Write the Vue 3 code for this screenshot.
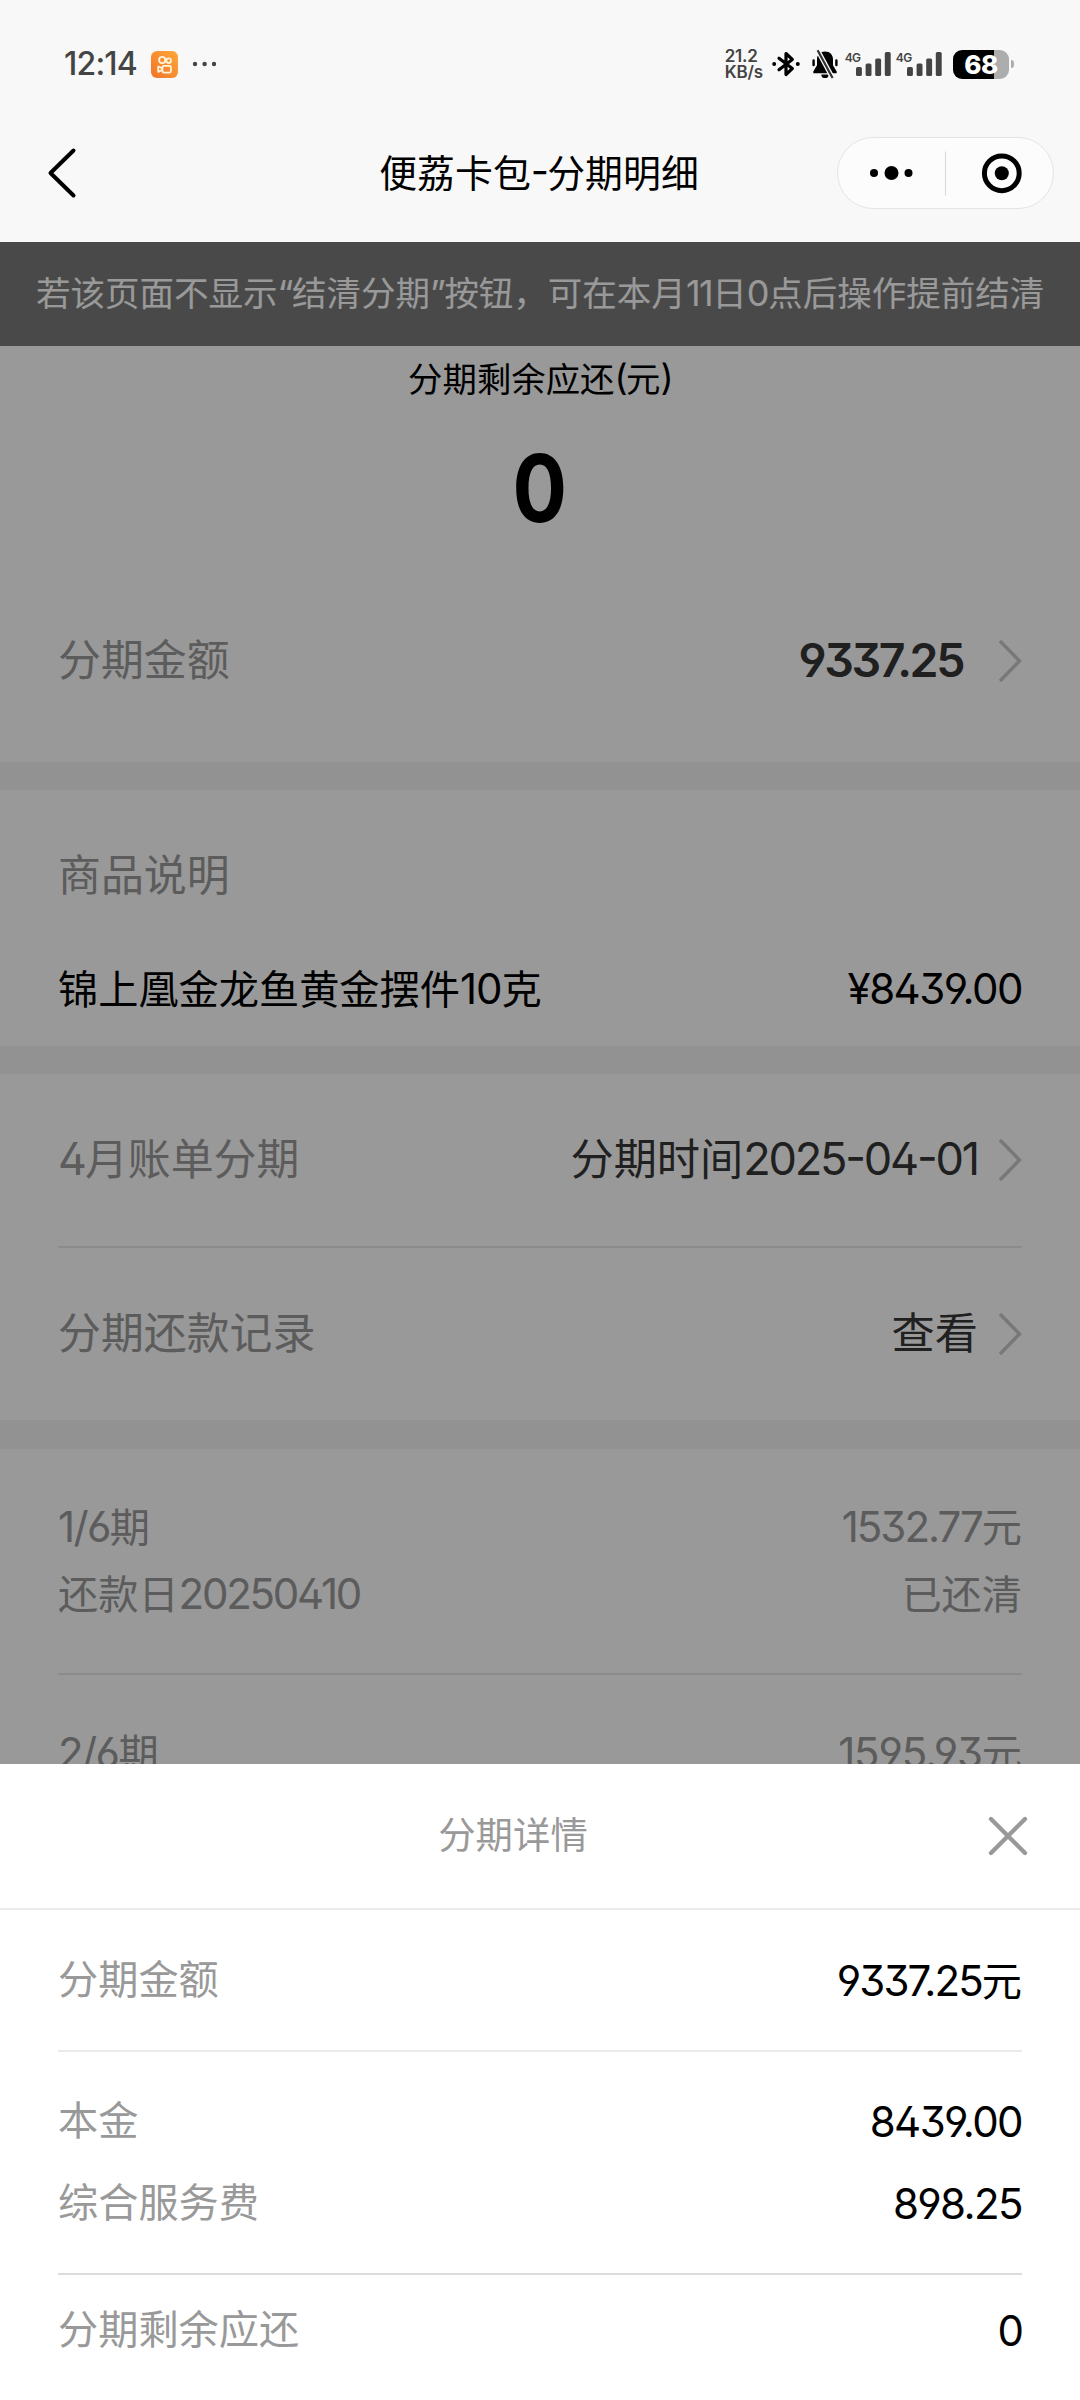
<script setup>
import { h } from 'vue'

// Splits a string into Latin/digit runs and Chinese runs so each gets its own face.
const Txt = (props) =>
  h(
    'span',
    { class: 'txt' },
    props.s
      .split(/([0-9A-Za-z.\-/¥()“”]+)/)
      .filter(Boolean)
      .map((run) => (/[0-9A-Za-z.\-/¥()“”]/.test(run) ? h('span', { class: 'num' }, run) : run))
  )
Txt.props = ['s']

const bars = [
  { x: 0, top: 15 },
  { x: 9.6, top: 11.6 },
  { x: 19.2, top: 6.4 },
  { x: 28.8, top: 0 },
]

const periods = [
  { name: '1/6期', amount: '1532.77元', due: '还款日20250410', state: '已还清' },
  { name: '2/6期', amount: '1595.93元', due: '还款日20250510', state: '已还清' },
]
</script>

<template>
  <div class="screen">
    <header class="top">
      <div class="status">
        <div class="status-left">
          <span class="time">12:14</span>
          <svg class="app" width="27" height="27" viewBox="0 0 27 27">
            <defs>
              <linearGradient id="kw" x1="1" y1="0" x2="0" y2="1">
                <stop offset="0" stop-color="#ffa838" />
                <stop offset="1" stop-color="#f0752a" />
              </linearGradient>
            </defs>
            <rect width="27" height="27" rx="6" fill="url(#kw)" />
            <g fill="none" stroke="#fff3d8" stroke-width="1.8">
              <circle cx="11.2" cy="9" r="3.1" />
              <circle cx="17.7" cy="9.7" r="2.3" />
              <rect x="11.4" y="14.8" width="8.6" height="6.800" rx="1.800" />
              <path d="M11.200 17.200 7.200 15.600v5.200l4-1.600" stroke-linejoin="round" />
            </g>
          </svg>
          <svg class="more" width="26" height="6" viewBox="0 0 26 6" fill="#444">
            <circle cx="3" cy="3" r="2.200" /><circle cx="12.600" cy="3" r="2.200" /><circle cx="22" cy="3" r="2.200" />
          </svg>
        </div>
        <div class="status-right">
          <div class="speed"><span>21.2</span><span>KB/s</span></div>
          <svg class="bt" width="28" height="28" viewBox="0 0 28 28">
            <path d="M7 8.200 20.300 18.600 14 24.500V3.500l6.300 5.900L7 19.800" fill="none" stroke="#000" stroke-width="3.200" stroke-linejoin="round" stroke-linecap="round" />
            <circle cx="2.200" cy="14" r="2" /><circle cx="25.800" cy="14" r="2" />
          </svg>
          <svg class="bell" width="26" height="30" viewBox="0 0 26 30">
            <path d="M13 2.500c-5 0-8 3.400-8 8v5.800L1.300 22.600v1.600h23.400v-1.600L21 16.300v-5.800c0-4.600-3-8-8-8z" />
            <path d="M9.300 25.400h7.400a3.700 3.700 0 0 1-7.400 0z" />
            <path d="M1.600 11.500v4.500M24.400 11.500v4.500" stroke="#000" stroke-width="2.400" stroke-linecap="round" />
            <path d="M5.600 1.200 20.600 29" stroke="#f8f8f8" stroke-width="4.800" />
            <path d="M5.600 1.200 20.600 29" stroke="#333" stroke-width="2.200" />
          </svg>
          <div v-for="n in 2" :key="n" class="signal">
            <span class="net">4G</span>
            <svg width="35" height="24" viewBox="0 0 35 24" fill="#444">
              <rect v-for="b in bars" :key="b.x" :x="b.x" :y="b.top" width="5.900" :height="24 - b.top" rx="1.500" />
            </svg>
          </div>
          <div class="battery"><span>68</span></div>
          <i class="nub"></i>
        </div>
      </div>
      <div class="nav">
        <svg class="back" width="30" height="52" viewBox="0 0 30 52">
          <path d="M26.500 3.500 3.500 26l23 22.500" fill="none" stroke="#000" stroke-width="4" stroke-linejoin="round" stroke-linecap="round" />
        </svg>
        <h1><Txt s="便荔卡包-分期明细" /></h1>
        <div class="capsule">
          <svg width="215" height="70" viewBox="0 0 215 70">
            <circle cx="36" cy="35" r="4" /><circle cx="53.500" cy="35" r="7" /><circle cx="70.500" cy="35" r="4" />
            <path d="M107.500 13.500v44" stroke="#dcdcdc" stroke-width="1.200" />
            <circle cx="163.800" cy="35.300" r="17.400" fill="none" stroke="#000" stroke-width="5" />
            <circle cx="163.800" cy="35.300" r="7" />
          </svg>
        </div>
      </div>
    </header>

    <main class="page">
      <div class="notice"><Txt s="若该页面不显示“结清分期”按钮，可在本月11日0点后操作提前结清" /></div>

      <section class="summary">
        <div class="caption"><Txt s="分期剩余应还(元)" /></div>
        <div class="big"><span>0</span></div>
        <div class="row total">
          <span class="label">分期金额</span>
          <span class="value strong"><Txt s="9337.25" /></span>
          <svg class="chev" width="24" height="44" viewBox="0 0 24 44"><path d="M2 2l19.500 20L2 42" /></svg>
        </div>
      </section>

      <section class="product">
        <div class="row head"><span class="label">商品说明</span></div>
        <div class="row item">
          <Txt class="name" s="锦上凰金龙鱼黄金摆件10克" />
          <Txt class="price" s="¥8439.00" />
        </div>
      </section>

      <section class="bill">
        <div class="row line">
          <Txt class="label" s="4月账单分期" />
          <Txt class="value date" s="分期时间2025-04-01" />
          <svg class="chev" width="24" height="44" viewBox="0 0 24 44"><path d="M2 2l19.500 20L2 42" /></svg>
        </div>
        <div class="row line">
          <span class="label">分期还款记录</span>
          <span class="value">查看</span>
          <svg class="chev" width="24" height="44" viewBox="0 0 24 44"><path d="M2 2l19.500 20L2 42" /></svg>
        </div>
      </section>

      <section class="periods">
        <div v-for="p in periods" :key="p.name" class="period">
          <div class="pair"><Txt class="nth" :s="p.name" /><Txt class="amt" :s="p.amount" /></div>
          <div class="pair"><Txt class="due" :s="p.due" /><span>{{ p.state }}</span></div>
        </div>
      </section>
      <div class="mask"></div>
    </main>

    <aside class="sheet">
      <div class="sheet-head">
        <span>分期详情</span>
        <svg class="close" width="40" height="40" viewBox="0 0 40 40"><path d="M3 3l34 34M37 3 3 37" stroke="#999" stroke-width="4.300" stroke-linecap="round" /></svg>
      </div>
      <div class="srow first"><span>分期金额</span><Txt class="sv" s="9337.25元" /></div>
      <div class="group">
        <div class="srow"><span>本金</span><Txt class="sv wide" s="8439.00" /></div>
        <div class="srow"><span>综合服务费</span><Txt class="sv wide" s="898.25" /></div>
      </div>
      <div class="srow last"><span>分期剩余应还</span><Txt class="sv" s="0" /></div>
    </aside>
  </div>
</template>

<style>
body { margin: 0; }
</style>

<style scoped>
.screen {
  position: relative;
  width: 1080px;
  height: 2400px;
  overflow: hidden;
  background: #fff;
  font-family: 'Noto Sans CJK SC', sans-serif;
  font-size: 40.200px;
  color: #000;
  white-space: nowrap;
}
:deep(.num) {
  font-family: Inter, 'Noto Sans CJK SC', sans-serif;
  font-size: 1.045em;
  line-height: 0;
  letter-spacing: -0.045em;
  font-feature-settings: 'cv09', 'ss01', 'cv03', 'cv04', 'case';
}
.price :deep(.num) { letter-spacing: -0.036em; }
.wide :deep(.num) { letter-spacing: -0.038em; }
.date :deep(.num) { letter-spacing: -0.049em; }
.due :deep(.num) { letter-spacing: -0.054em; }
.strong :deep(.num) { letter-spacing: -0.052em; }
.name :deep(.num) { letter-spacing: -0.025em; }
.nth :deep(.num) { letter-spacing: -0.038em; }
.notice :deep(.num) { letter-spacing: -0.040em; }
.amt :deep(.num) { letter-spacing: -0.048em; }
.period + .period .amt :deep(.num) { letter-spacing: -0.028em; }
svg { display: block; flex: none; }

.top { height: 242px; background: #f8f8f8; }
.status {
  height: 128px;
  box-sizing: border-box;
  padding: 0 66px 0 64px;
  display: flex;
  justify-content: space-between;
  align-items: center;
  color: #444;
  font-family: Inter, sans-serif;
}
.status-left, .status-right { display: flex; align-items: center; }
.time { width: 87px; font-size: 32px; line-height: 40px; letter-spacing: -0.800px; font-weight: 450; }
.more { margin-left: 14px; }
.speed {
  display: flex;
  flex-direction: column;
  width: 47px;
  font-size: 17px;
  line-height: 16px;
  font-weight: 600;
}
.speed span { letter-spacing: -0.200px; }
.bell { margin-left: 12px; }
.signal { display: flex; margin-left: 7px; width: 44.200px; }
.signal .net { width: 11px; font-size: 12px; line-height: 12px; font-weight: 600; letter-spacing: -0.500px; }
.signal svg { margin-left: auto; }
.battery {
  width: 56px;
  height: 29px;
  margin-left: 13px;
  border-radius: 9px;
  background: linear-gradient(90deg, #000 41px, #adadad 41px);
  color: #fff;
  font-size: 26px;
  line-height: 29px;
  font-weight: 800;
  letter-spacing: -0.500px;
  text-align: center;
}
.nub { width: 3px; height: 8px; margin-left: 2px; border-radius: 0 3px 3px 0; background: #adadad; }

.nav {
  height: 114px;
  box-sizing: border-box;
  padding: 0 26px 24px 47px;
  display: grid;
  grid-template-columns: 217px 1fr 217px;
  align-items: center;
}
h1 { margin: 0; padding: 0 23px 5px 0; font-size: 37.900px; line-height: 50px; font-weight: 400; text-align: center; }
.capsule { box-sizing: border-box; width: 217px; height: 72px; border: 1px solid #e4e4e4; border-radius: 36px; background: #fcfcfc; }

.page { position: relative; height: 2158px; background: #fff; overflow: hidden; }
.mask { position: absolute; inset: 0; background: rgba(0, 0, 0, 0.4); }
.notice {
  height: 104px;
  box-sizing: border-box;
  padding: 0 0 7px 36px;
  display: flex;
  align-items: center;
  background: #7b7b7b;
  color: #fff;
  font-size: 34.500px;
}
.summary { height: 416px; }
.caption { height: 64px; line-height: 63px; font-size: 34.400px; text-align: center; }
.big { height: 156px; line-height: 156px; font-family: Inter, sans-serif; font-size: 94px; font-weight: 700; text-align: center; }
.big span { display: inline-block; transform: scaleX(0.860); }
.row { display: flex; align-items: center; box-sizing: border-box; padding: 0 58px; }
.label { color: #999; font-size: 42.900px; }
.value { margin-left: auto; color: #363636; font-size: 43.200px; }
.chev { margin: 8px 0 0 20px; fill: none; stroke: #c8c8c8; stroke-width: 3.400; }
.total { height: 196px; padding-bottom: 15px; }
.strong { font-weight: 600; font-size: 44.500px; padding-top: 1px; }
.total .chev { margin-left: 35px; }
.product, .bill { border-top: 28px solid #f3f3f3; }
.product { height: 256px; }
.head { height: 164px; padding-bottom: 1px; }
.item { height: 64px; justify-content: space-between; }
.line { height: 172px; padding-bottom: 9px; position: relative; }
.line + .line { height: 174px; padding-top: 2px; }
.line + .line::before { content: ''; position: absolute; left: 58px; right: 58px; top: 0; height: 2px; background: #e8e8e8; }
.periods { border-top: 29px solid #f3f3f3; color: #999; padding: 0 58px; }
.period { height: 226px; box-sizing: border-box; padding-top: 41.500px; border-bottom: 2px solid #e8e8e8; }
.pair { height: 67px; display: flex; align-items: center; justify-content: space-between; }

.sheet { position: absolute; left: 0; right: 0; bottom: 0; height: 636px; background: #fff; color: #999; }
.sheet-head {
  height: 146px;
  box-sizing: border-box;
  border-bottom: 2px solid #ebebeb;
  padding: 0 52px 0 0;
  display: grid;
  grid-template-columns: 1fr 40px;
  align-items: center;
  font-size: 37.400px;
}
.sheet-head span { text-align: center; padding: 0 0 6px 38px; }
.srow { height: 82px; display: flex; align-items: center; justify-content: space-between; box-sizing: border-box; padding-bottom: 3px; }
.sv { color: #000; padding-top: 3px; }
.first { height: 142px; margin: 0 58px; padding-bottom: 7px; border-bottom: 2px solid #ebebeb; }
.group { margin: 0 58px; padding: 26px 0 31px; border-bottom: 2px solid #dcdcdc; }
.last { height: 106px; margin: 0 58px; }
</style>
